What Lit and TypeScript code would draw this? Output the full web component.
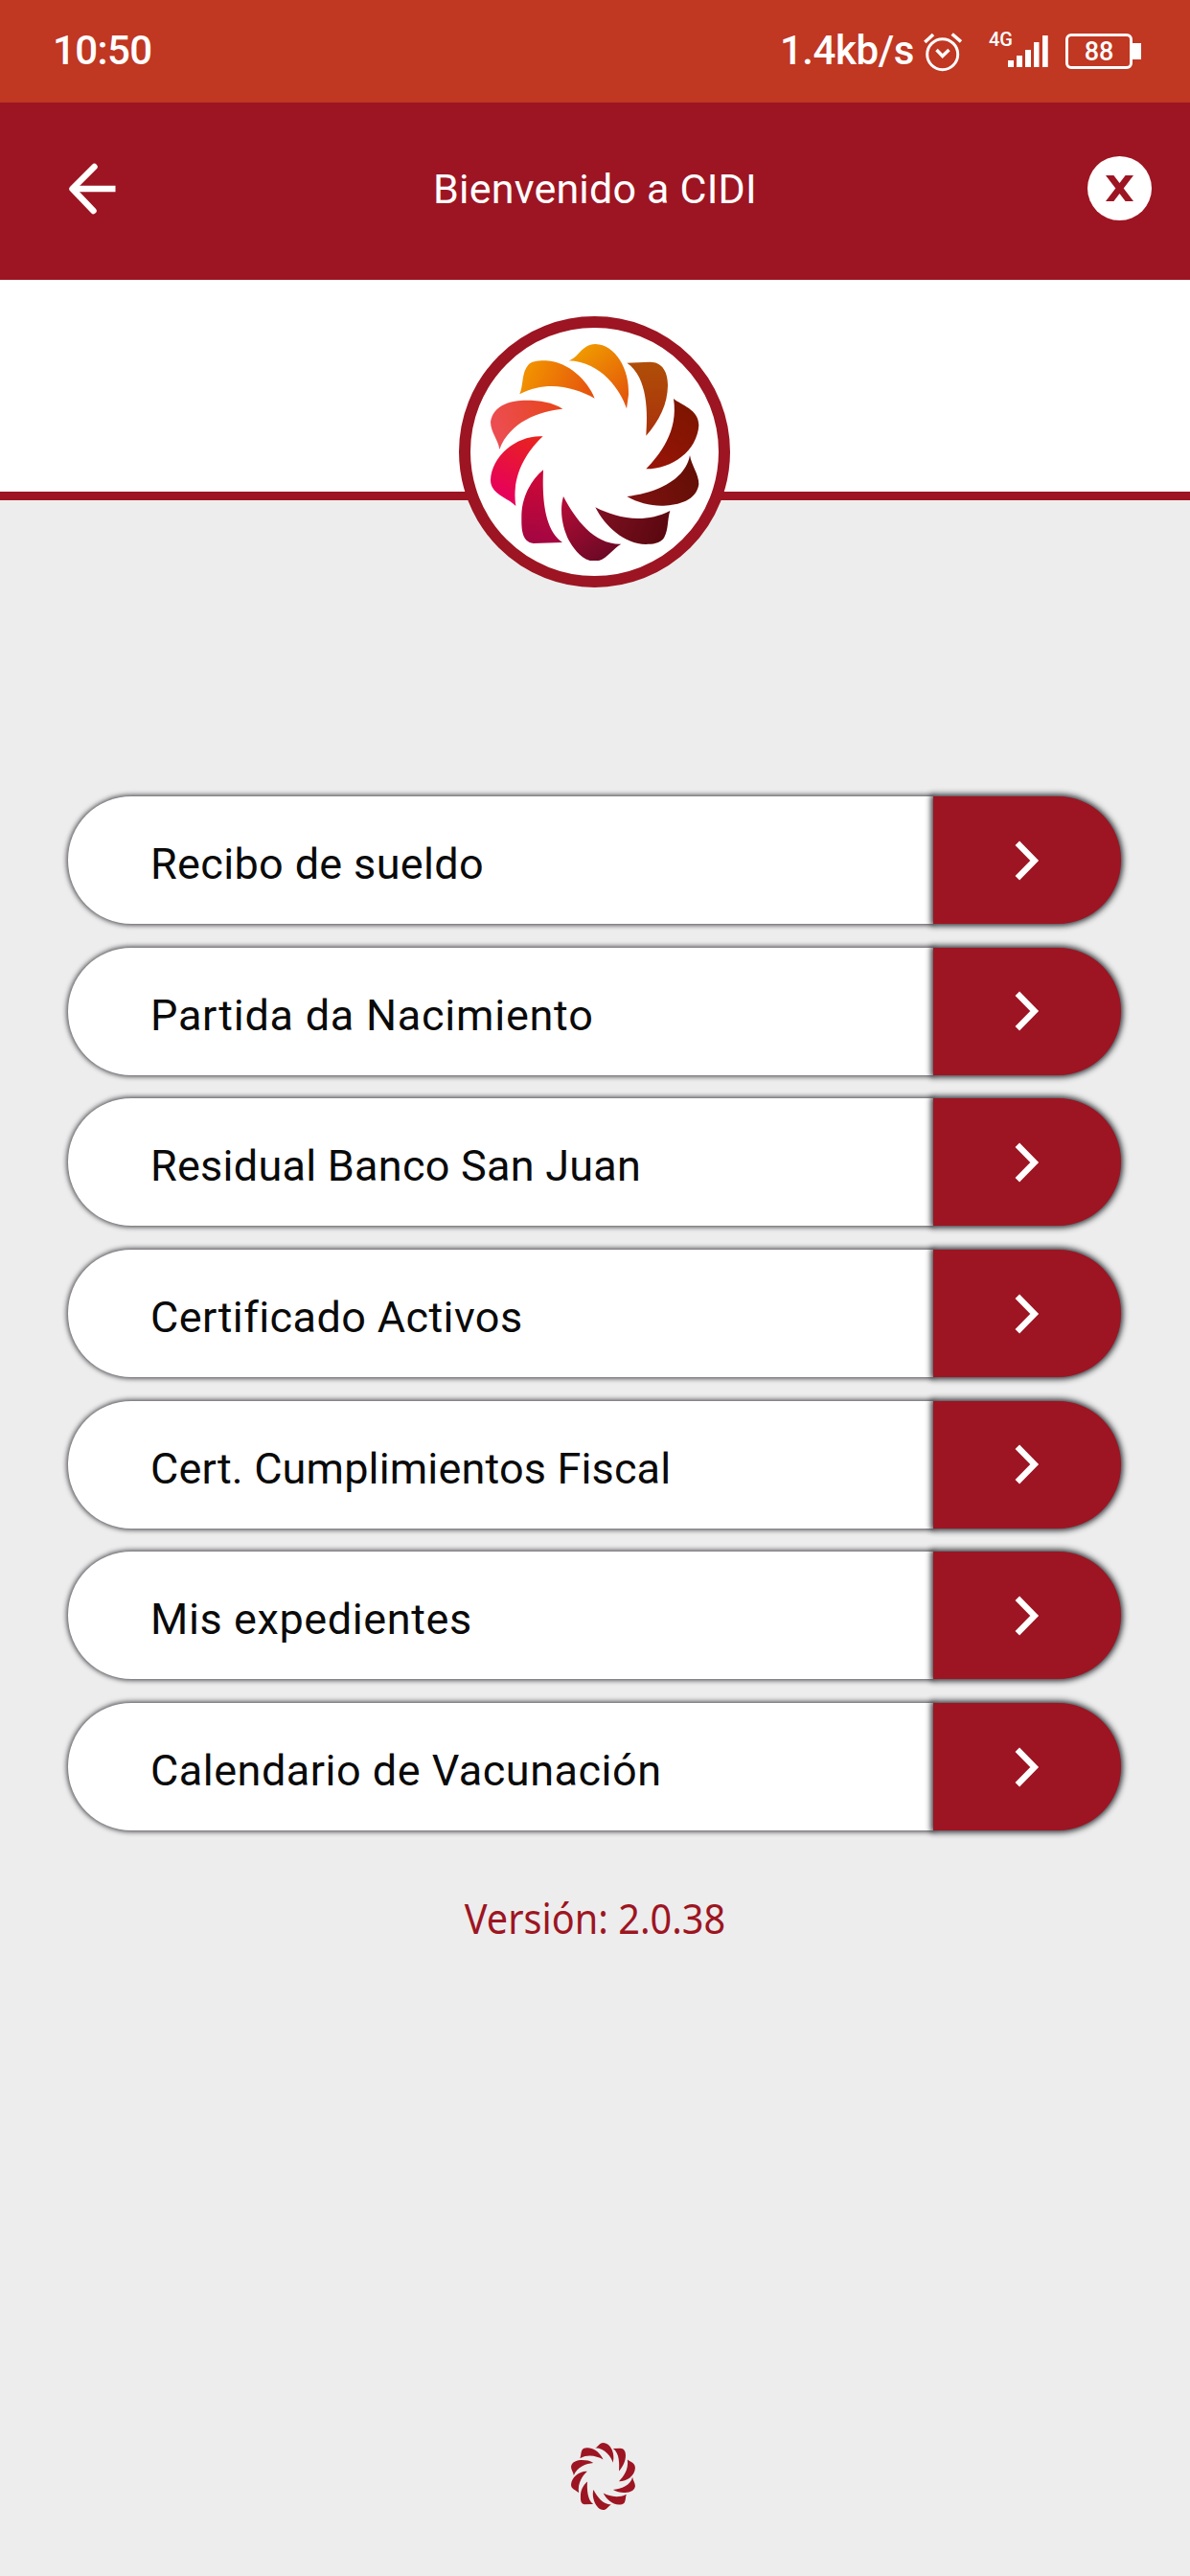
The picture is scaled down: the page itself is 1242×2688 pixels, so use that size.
import { LitElement, html, css, svg } from "lit";
import { customElement, property } from "lit/decorators.js";
import { styleMap } from "lit/directives/style-map.js";

interface Petal {
  d: string;
  from: [number, number, string];
  to: [number, number, string];
}

const PETALS: Petal[] = [
  { d: "M400 198C432 190 440 147 484 146C547 148 592 225 588 305L582 348C562 290 505 203 400 198Z", from: [440, 160, "#f09a00"], to: [590, 340, "#e2500c"] },
  { d: "M583 205L655 202C695 202 711 235 711 275C710 335 685 385 643 433C648 365 650 250 583 205Z", from: [650, 200, "#b04f08"], to: [650, 430, "#aa310b"] },
  { d: "M729 317C752 337 808 350 808 400C803 480 725 537 643 537C685 493 745 420 729 317Z", from: [790, 350, "#7d1500"], to: [660, 530, "#971407"] },
  { d: "M780 494C785 527 808 552 808 585C800 640 735 652 690 652C655 652 615 642 583 623C665 613 765 577 780 494Z", from: [800, 560, "#640f05"], to: [600, 630, "#7f1111"] },
  { d: "M484 657C548 690 635 711 718 668C709 695 714 725 699 753C687 771 662 773 642 773C575 773 513 715 484 657Z", from: [495, 670, "#7e1021"], to: [690, 760, "#5b0810"] },
  { d: "M384 623C422 695 480 774 565 772C538 785 518 826 481 826C440 825 413 780 401 760C383 725 370 670 384 623Z", from: [390, 640, "#b30c37"], to: [500, 820, "#6d0925"] },
  { d: "M321 540C318 615 320 725 381 767L290 770C250 765 253 715 253 680C255 625 280 575 321 540Z", from: [310, 560, "#cd0838"], to: [290, 765, "#a30642"] },
  { d: "M320 435C272 480 220 555 235 653C210 626 156 618 156 571C160 495 240 430 320 435Z", from: [290, 440, "#e82220"], to: [190, 620, "#e7005c"] },
  { d: "M382 349C310 355 215 390 184 476C180 445 157 425 156 390C164 335 223 322 268 322C310 322 350 328 382 349Z", from: [370, 340, "#e7451c"], to: [180, 410, "#ec4d50"] },
  { d: "M482 316C418 282 335 258 247 303C260 272 252 235 276 209C290 198 310 198 330 198C400 202 460 260 482 316Z", from: [280, 220, "#f19000"], to: [475, 310, "#e5510e"] },
];

@customElement("petal-ring")
export class PetalRing extends LitElement {
  @property() tint = "";

  static styles = css`
    :host { display: block; }
    .ring { display: block; width: 100%; height: 100%; }
  `;

  render() {
    return html`<svg class="ring" viewBox="156 146 652.500 680" preserveAspectRatio="none">
      <defs>
        ${PETALS.map((p, i) => svg`<linearGradient id=${"g" + i} gradientUnits="userSpaceOnUse"
          x1=${p.from[0]} y1=${p.from[1]} x2=${p.to[0]} y2=${p.to[1]}>
          <stop offset="0" stop-color=${p.from[2]}></stop>
          <stop offset="1" stop-color=${p.to[2]}></stop>
        </linearGradient>`)}
      </defs>
      ${PETALS.map((p, i) => svg`<path d=${p.d} fill=${this.tint || `url(#g${i})`}></path>`)}
    </svg>`;
  }
}

@customElement("status-bar")
export class StatusBar extends LitElement {
  static styles = css`
    :host {
      display: flex; box-sizing: border-box; height: 107px; padding: 0 51px 0 55px;
      justify-content: space-between; align-items: flex-start;
      background: #c03722; color: #fff; font-family: Roboto, sans-serif; font-weight: 500;
    }
    .clock, .rate { font-size: 42px; line-height: 50px; margin-top: 28px; letter-spacing: -0.600px; }
    .right { display: flex; align-items: flex-start; }
    .rate { letter-spacing: -0.400px; }
    .alarm { width: 40px; height: 42px; margin: 33px 0 0 10px; }
    .net { font-size: 20px; line-height: 24px; margin: 29px 0 0 28px; width: 20px; white-space: nowrap; }
    .bars { width: 42px; height: 34px; margin: 36px 0 0 0; }
    .battery { display: flex; align-items: center; margin: 35px 0 0 18px; }
    .cell {
      box-sizing: border-box; width: 70px; height: 37px; border: 3px solid #fff; border-radius: 6px;
      font-size: 27px; line-height: 32px; text-align: center;
    }
    .tip { width: 9px; height: 17px; background: #fff; }
  `;

  render() {
    return html`
      <span class="clock">10:50</span>
      <div class="right">
        <span class="rate">1.4kb/s</span>
        <svg class="alarm" viewBox="0 0 40 42" fill="none" stroke="#fff" stroke-width="3">
          <circle cx="19.700" cy="23.700" r="16"></circle>
          <path d="M13.500 19L19.700 25.500L26.500 19" stroke-width="3.400"></path>
          <path d="M1.300 11L10 3M29.700 2.500L39 10.500" stroke-width="3.600"></path>
        </svg>
        <span class="net">4G</span>
        <svg class="bars" viewBox="0 0 42 34" fill="#fff">
          <path d="M0 27h6v7H0zM9 22h6v12H9zM18 16h6v18h-6zM27 8h5.500v26H27zM36 1h5.700v33H36z"></path>
        </svg>
        <div class="battery"><div class="cell">88</div><div class="tip"></div></div>
      </div>`;
  }
}

@customElement("app-header")
export class AppHeader extends LitElement {
  static styles = css`
    :host {
      display: grid; grid-template-columns: 120px 1fr 120px; align-items: center;
      box-sizing: border-box; height: 185px; padding: 0 40px 6px; background: #9d1522;
      color: #fff; font-family: Roboto, sans-serif;
    }
    .back { width: 50px; height: 54px; margin-left: 31px; }
    .title { font-size: 43px; line-height: 60px; text-align: center; font-weight: 400; letter-spacing: 0.200px; margin: 0; }
    .close { justify-self: end; width: 67px; height: 67px; border-radius: 50%; background: #fff; display: grid; place-items: center; }
    .cross { width: 29px; height: 27px; overflow: hidden; }
  `;

  render() {
    return html`
      <svg class="back" viewBox="0 0 50 54" fill="none" stroke="#fff" stroke-width="6.500">
        <path d="M27.500 4L4.500 27L26.500 50" stroke-linecap="round" stroke-linejoin="round"></path>
        <path d="M5 27H49.500"></path>
      </svg>
      <h1 class="title">Bienvenido a CIDI</h1>
      <div class="close">
        <svg class="cross" viewBox="0 0 29 27" stroke="#9d1522" stroke-width="6.700">
          <path d="M1.900 -3L27.100 30M27.100 -3L1.900 30"></path>
        </svg>
      </div>`;
  }
}

@customElement("menu-row")
export class MenuRow extends LitElement {
  @property() label = "";
  @property({ type: Number }) tracking = 0;

  static styles = css`
    :host { display: flex; height: 133px; }
    .text {
      flex: 1; background: #fff; border-radius: 66px 0 0 66px; padding: 4px 0 0 86px;
      box-shadow: 0 0 5px 1.500px rgba(40, 36, 44, 0.800);
      font: 400 45px/133px Roboto, sans-serif; color: #0a0a0a; box-sizing: border-box; white-space: nowrap;
    }
    .go {
      width: 195.500px; background: #9d1522; border-radius: 0 66px 66px 0; display: flex; align-items: center;
      box-shadow: 0 0 6px 2px rgba(20, 22, 28, 0.900);
    }
    .chevron { width: 26px; height: 42px; margin-left: 85px; }
  `;

  render() {
    return html`
      <div class="text"><span style=${styleMap({ letterSpacing: `${this.tracking}px` })}>${this.label}</span></div>
      <div class="go">
        <svg class="chevron" viewBox="0 0 26 42" fill="none" stroke="#fff" stroke-width="6.300">
          <path d="M2.800 2.800L20.700 21L2.800 39.200"></path>
        </svg>
      </div>`;
  }
}

const ROWS = [
  { label: "Recibo de sueldo", tracking: 0.35 },
  { label: "Partida da Nacimiento", tracking: 0.75 },
  { label: "Residual Banco San Juan", tracking: 0.25 },
  { label: "Certificado Activos", tracking: 0.4 },
  { label: "Cert. Cumplimientos Fiscal", tracking: 0.15 },
  { label: "Mis expedientes", tracking: 0.6 },
  { label: "Calendario de Vacunación", tracking: 0.5 },
];

@customElement("app-root")
export class AppRoot extends LitElement {
  static styles = css`
    :host { display: flex; flex-direction: column; width: 1242px; height: 2688px; background: #ededed; overflow: hidden; }
    .hero { position: relative; box-sizing: border-box; height: 230px; background: #fff; border-bottom: 9px solid #9d1522; }
    .badge {
      position: absolute; left: 479px; top: 38px; width: 283px; height: 283px; box-sizing: border-box;
      border: 12px solid #9d1522; border-radius: 50%; background: #fff;
    }
    .logo { width: 217.500px; height: 226.700px; margin: 16.500px 0 0 21px; }
    .menu { display: flex; flex-direction: column; gap: 24.700px; padding: 309px 72.500px 0 71px; }
    .version { margin: 61.500px 0 0; text-align: center; font: 400 43px/60px "Noto Sans", sans-serif; color: #9d1522; transform: scaleX(0.922); }
    .foot { margin: auto 0 69px 596px; width: 67px; height: 70px; }
  `;

  render() {
    return html`
      <status-bar></status-bar>
      <app-header></app-header>
      <div class="hero"><div class="badge"><petal-ring class="logo"></petal-ring></div></div>
      <nav class="menu">
        ${ROWS.map((r) => html`<menu-row .label=${r.label} .tracking=${r.tracking}></menu-row>`)}
      </nav>
      <p class="version">Versión: 2.0.38</p>
      <petal-ring class="foot" tint="#9d1522"></petal-ring>`;
  }
}
